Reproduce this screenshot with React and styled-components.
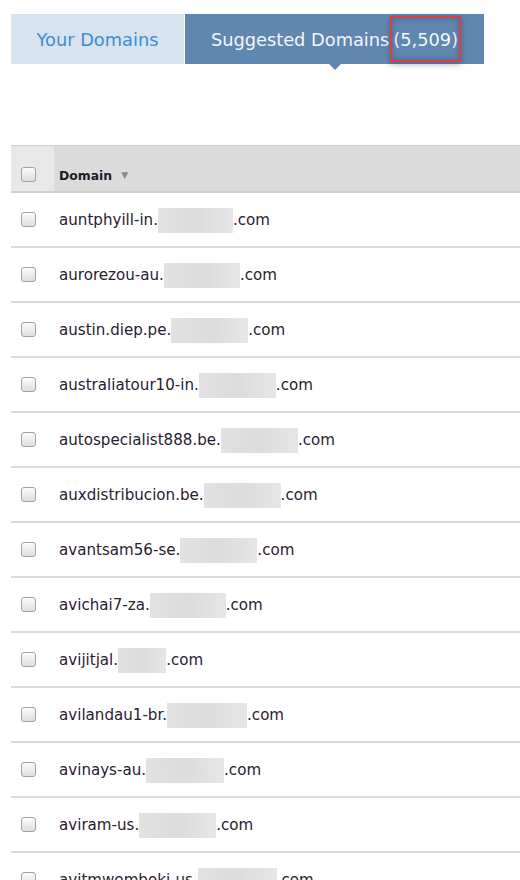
import React from 'react'
import styled, { createGlobalStyle } from 'styled-components'

const Global = createGlobalStyle`
  body {
    margin: 0;
    background: #fff;
    font-family: "DejaVu Sans", Verdana, sans-serif;
    overflow: hidden;
  }
`

const Page = styled.div`
  width: 520px;
  height: 880px;
  overflow: hidden;
  padding: 14px 0 0 11px;
  box-sizing: border-box;
`

const Tabs = styled.div`
  display: flex;
  height: 50px;
`

const Tab = styled.div`
  position: relative;
  display: flex;
  align-items: center;
  justify-content: center;
  width: ${p => p.w}px;
  margin-right: 1px;
  font-size: 17.8px;
  background: ${p => (p.active ? '#5f87b0' : '#d7e3ee')};
  color: ${p => (p.active ? '#f4f6f8' : '#3a8ed0')};

  ${p => p.active && `
    &::after {
      content: '';
      position: absolute;
      left: 50%;
      bottom: -6px;
      margin-left: -6px;
      border-left: 6px solid transparent;
      border-right: 6px solid transparent;
      border-top: 6px solid #5f87b0;
    }
  `}
`

const Count = styled.span`
  position: relative;
  margin-left: 4px;
  &::before {
    content: '';
    position: absolute;
    left: -3px;
    right: -3px;
    top: -13px;
    bottom: -12px;
    border: 2px solid #e43c3e;
    box-shadow: inset 0 0 6px rgba(30, 50, 80, 0.35), 0 2px 6px rgba(30, 50, 80, 0.4);
  }
`

const Table = styled.div`
  margin-top: 81px;
`

const Header = styled.div`
  display: flex;
  height: 45px;
  background: #dbdbdb;
  border-top: 1px solid #d0d0d0;
  border-bottom: 2px solid #cfcfcf;
`

const CheckCell = styled.div`
  display: flex;
  align-items: ${p => (p.head ? 'flex-end' : 'center')};
  width: 43px;
  flex: 0 0 43px;
  padding: 0 0 ${p => (p.head ? '9px' : '0')} 10px;
  box-sizing: border-box;
  background: ${p => (p.head ? '#e8e8e8' : 'transparent')};
`

const Box = styled.span`
  display: inline-block;
  width: 13px;
  height: 13px;
  border: 1px solid #a3a3a3;
  border-radius: 3px;
  background: linear-gradient(#fbfbfb, #dedede);
`

const HeadLabel = styled.div`
  display: flex;
  align-items: flex-end;
  padding: 0 0 8px 5px;
  font-size: 12.4px;
  font-weight: bold;
  color: #1c1c2a;
`

const Arrow = styled.span`
  margin-left: 9px;
  font-size: 9px;
  color: #8a8a8a;
  line-height: 15px;
`

const Row = styled.div`
  display: flex;
  align-items: center;
  height: 53px;
  border-bottom: 2px solid #dadada;
`

const Name = styled.div`
  display: flex;
  align-items: center;
  padding-left: 5px;
  font-size: 15.1px;
  color: #2a2030;
`

const Blur = styled.span`
  display: inline-block;
  width: ${p => p.w}px;
  height: 25px;
  margin-top: 2px;
  background: linear-gradient(90deg, #e2e2e2, #dcdcdc 50%, #e6e6e6);
`

const domains = [
  ['auntphyill-in.', 75],
  ['aurorezou-au.', 76],
  ['austin.diep.pe.', 77],
  ['australiatour10-in.', 77],
  ['autospecialist888.be.', 77],
  ['auxdistribucion.be.', 77],
  ['avantsam56-se.', 77],
  ['avichai7-za.', 76],
  ['avijitjal.', 48],
  ['avilandau1-br.', 80],
  ['avinays-au.', 78],
  ['aviram-us.', 77],
  ['avitmwemboki-us.', 79],
]

export default function App() {
  return (
    <>
      <Global />
      <Page>
        <Tabs>
          <Tab w={173}>Your Domains</Tab>
          <Tab w={299} active>
            Suggested Domains<Count>(5,509)</Count>
          </Tab>
        </Tabs>
        <Table>
          <Header>
            <CheckCell head><Box /></CheckCell>
            <HeadLabel>Domain<Arrow>▼</Arrow></HeadLabel>
          </Header>
          {domains.map(([name, w]) => (
            <Row key={name}>
              <CheckCell><Box /></CheckCell>
              <Name>{name}<Blur w={w} />.com</Name>
            </Row>
          ))}
        </Table>
      </Page>
    </>
  )
}
